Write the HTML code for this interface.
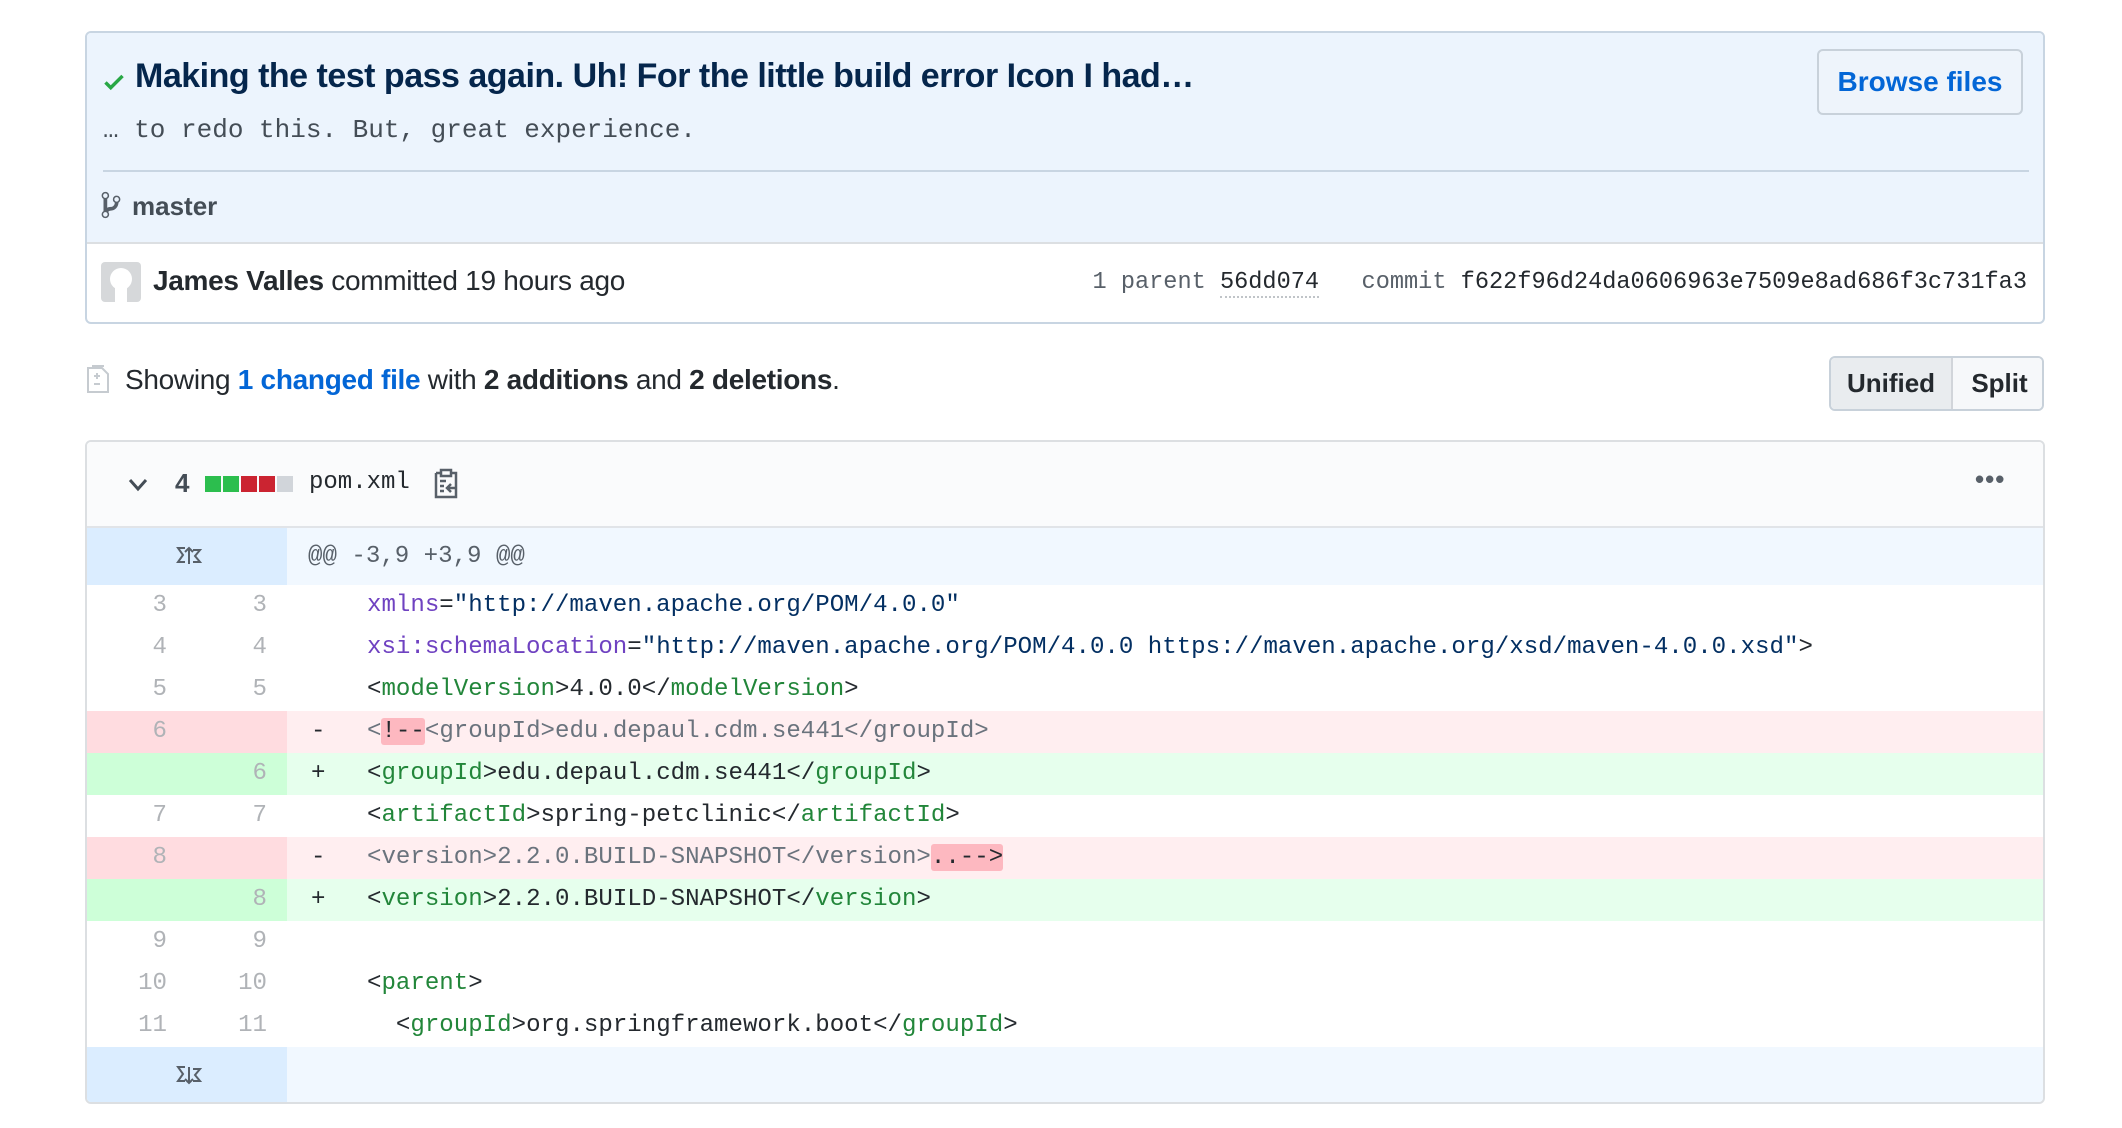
<!DOCTYPE html>
<html><head><meta charset="utf-8">
<style>
*{box-sizing:border-box;margin:0;padding:0}
body{width:2122px;height:1128px;background:#fff;font-family:"Liberation Sans",sans-serif;color:#24292e;position:relative;overflow:hidden}
.abs{position:absolute}
.mono{font-family:"Liberation Mono",monospace}
.box{left:85px;top:31px;width:1960px;height:293px;border:2px solid #c8d5e2;border-radius:6px;overflow:hidden;background:#fff}
.top{left:0;top:0;width:100%;height:211px;background:#ecf4fd;border-bottom:2px solid #dcdfe2}
.title{left:48px;top:24px;font-size:34px;font-weight:bold;color:#05264c;letter-spacing:-0.5px;white-space:nowrap}
.desc{left:16px;top:82px;font-size:26px;color:#444d56;white-space:pre}
.sep{left:16px;top:137px;width:1926px;height:2px;background:#c8d5e2}
.btn{left:1730px;top:16px;width:206px;height:66px;border:2px solid #c8d1da;border-radius:6px;background:#eef4fb;color:#0366d6;font-weight:bold;font-size:28px;text-align:center;line-height:62px}
.code{font-family:"Liberation Mono",monospace;font-size:24.1px;white-space:pre}
.row{position:absolute;left:0;width:1958px;height:42px;line-height:42px}
.ln{position:absolute;width:100px;height:100%;text-align:right;padding-right:20px;color:#b0b3b7}
.ln1{left:0}.ln2{left:100px}
.mk{position:absolute;left:224px}
.tx{position:absolute;left:280px}
.t{color:#22863a}.a{color:#6f42c1}.s{color:#032f62}.c{color:#6a737d}
.del{background:#ffeef0}.del .ln{background:#ffdce0}
.add{background:#e6ffed}.add .ln{background:#cdffd8}
.hl{background:#fdb8c0;border-radius:3px}
</style></head><body>

<div class="abs box">
  <div class="abs top">
    <svg class="abs" style="left:14px;top:36px" width="26" height="26" viewBox="0 0 12 16"><path d="M12 5l-8 8-4-4 1.5-1.5L4 10l6.5-6.5z" fill="#28a745"/></svg>
    <div class="abs title">Making the test pass again. Uh! For the little build error Icon I had…</div>
    <div class="abs desc mono">… to redo this. But, great experience.</div>
    <div class="abs sep"></div>
    <svg class="abs" style="left:14px;top:157px" width="20" height="30" viewBox="0 0 10 16"><path fill="#586069" d="M10 5c0-1.11-.89-2-2-2a1.993 1.993 0 0 0-1 3.720v.3c-.02.52-.23.98-.63 1.38-.4.4-.86.61-1.38.63-.83.02-1.480.16-2 .45V4.72a1.993 1.993 0 0 0-1-3.72C.88 1 0 1.89 0 3a2 2 0 0 0 1 1.72v6.56c-.59.35-1 .99-1 1.72 0 1.11.89 2 2 2 1.11 0 2-.89 2-2 0-.53-.2-1-.53-1.36.09-.06.48-.41.59-.47.25-.11.56-.17.94-.17 1.05-.05 1.95-.45 2.75-1.25S8.95 7.77 9 6.73h-.02C9.59 6.37 10 5.73 10 5zM2 1.8c.66 0 1.2.55 1.2 1.2 0 .65-.55 1.2-1.2 1.2C1.35 4.2.8 3.65.8 3c0-.65.55-1.2 1.2-1.2zm0 12.41c-.66 0-1.2-.55-1.2-1.2 0-.65.55-1.2 1.2-1.2.65 0 1.2.55 1.2 1.2 0 .65-.55 1.2-1.2 1.2zm6-8c-.66 0-1.2-.55-1.2-1.2 0-.65.55-1.2 1.2-1.2.65 0 1.2.55 1.2 1.2 0 .65-.55 1.2-1.2 1.2z"/></svg>
    <div class="abs" style="left:45px;top:158px;font-size:26px;font-weight:bold;color:#444d56">master</div>
    <div class="abs btn">Browse files</div>
  </div>
  <div class="abs" style="left:14px;top:229px;width:40px;height:40px;border-radius:4px;background:#d6d8da;overflow:hidden">
    <svg width="40" height="40" viewBox="0 0 40 40"><circle cx="20" cy="17" r="11" fill="#fff"/><rect x="14" y="24" width="12" height="16" fill="#fff"/></svg>
  </div>
  <div class="abs" style="left:66px;top:232px;font-size:28px;white-space:nowrap;letter-spacing:-0.3px"><b>James Valles</b> committed 19 hours ago</div>
  <div class="abs mono" style="right:16px;top:236px;font-size:23.6px;color:#586069;white-space:pre">1 parent <span style="color:#24292e;border-bottom:2px dotted #c0c4c8">56dd074</span>   commit <span style="color:#24292e">f622f96d24da0606963e7509e8ad686f3c731fa3</span></div>
</div>

<svg class="abs" style="left:86px;top:364px" width="24" height="30" viewBox="0 0 24 30"><path d="M2 4h14l6 6v18H2z" fill="none" stroke="#c6cbd0" stroke-width="2"/><path d="M6 2h12" stroke="#c6cbd0" stroke-width="2"/><path d="M8 12h6M11 9v6M8 20h6" stroke="#c6cbd0" stroke-width="2"/></svg>
<div class="abs" style="left:125px;top:364px;font-size:28px;white-space:nowrap;letter-spacing:-0.3px">Showing <span style="color:#0366d6;font-weight:bold">1 changed file</span> with <b>2 additions</b> and <b>2 deletions</b>.</div>

<div class="abs" style="left:1829px;top:356px;width:215px;height:55px;border:2px solid #c8d1da;border-radius:6px;overflow:hidden;font-size:26px;font-weight:bold">
  <div class="abs" style="left:0;top:0;width:122px;height:100%;background:#e9ecef;border-right:2px solid #d1d5da;text-align:center;line-height:51px">Unified</div>
  <div class="abs" style="left:122px;top:0;width:93px;height:100%;background:#f6f8fa;text-align:center;line-height:51px">Split</div>
</div>

<div class="abs" style="left:85px;top:440px;width:1960px;height:664px;border:2px solid #dcdfe2;border-radius:6px;overflow:hidden;background:#fff">
  <div class="abs" style="left:0;top:0;width:100%;height:86px;background:#fafbfc;border-bottom:2px solid #e1e4e8">
    <svg class="abs" style="left:40px;top:33px" width="22" height="20" viewBox="0 0 22 20"><path d="M3 5l8 9 8-9" fill="none" stroke="#444d56" stroke-width="3"/></svg>
    <div class="abs" style="left:88px;top:26px;font-size:26px;font-weight:bold;color:#444d56">4</div>
    <div class="abs" style="left:118px;top:34px;width:16px;height:16px;background:#2cbe4e"></div>
    <div class="abs" style="left:136px;top:34px;width:16px;height:16px;background:#2cbe4e"></div>
    <div class="abs" style="left:154px;top:34px;width:16px;height:16px;background:#cb2431"></div>
    <div class="abs" style="left:172px;top:34px;width:16px;height:16px;background:#cb2431"></div>
    <div class="abs" style="left:190px;top:34px;width:16px;height:16px;background:#d1d5da"></div>
    <div class="abs mono" style="left:222px;top:27px;font-size:24px">pom.xml</div>
    <svg class="abs" style="left:346px;top:26px" width="26" height="32" viewBox="0 0 26 32"><path d="M3 5h5M18 5h5v24H3V5" fill="none" stroke="#586069" stroke-width="2.5"/><rect x="8" y="2" width="10" height="6" fill="none" stroke="#586069" stroke-width="2.5"/><path d="M7 13h6M7 18h4M7 23h4M24 20h-10M18 16l-4 4 4 4" fill="none" stroke="#586069" stroke-width="2.5"/></svg>
    <div class="abs" style="left:1888px;top:22px;font-size:26px;font-weight:bold;color:#586069;letter-spacing:1px">•••</div>
  </div>
  <div class="abs" style="left:0;top:86px;width:100%;height:57px;background:#f1f8ff">
    <div class="abs" style="left:0;top:0;width:200px;height:57px;background:#dbedff"></div>
    <svg class="abs" style="left:88px;top:16px" width="28" height="24" viewBox="0 0 28 24" fill="none" stroke="#586069" stroke-width="2"><path d="M10 4H3l5 7-5 7h7M14 20V4M10 8l4-4 4 4M18 6h7l-5 6 5 6h-7"/></svg>
    <div class="abs code" style="left:221px;top:15px;color:#586069">@@ -3,9 +3,9 @@</div>
  </div>
  <div class="abs code" style="left:0;top:143px;width:100%">
    <div class="row" style="top:0"><span class="ln ln1">3</span><span class="ln ln2">3</span><span class="tx"><span class="a">xmlns</span>=<span class="s">"http://maven.apache.org/POM/4.0.0"</span></span></div>
    <div class="row" style="top:42px"><span class="ln ln1">4</span><span class="ln ln2">4</span><span class="tx"><span class="a">xsi:schemaLocation</span>=<span class="s">"http://maven.apache.org/POM/4.0.0 https://maven.apache.org/xsd/maven-4.0.0.xsd"</span>&gt;</span></div>
    <div class="row" style="top:84px"><span class="ln ln1">5</span><span class="ln ln2">5</span><span class="tx">&lt;<span class="t">modelVersion</span>&gt;4.0.0&lt;/<span class="t">modelVersion</span>&gt;</span></div>
    <div class="row del" style="top:126px"><span class="ln ln1">6</span><span class="ln ln2"></span><span class="mk">-</span><span class="tx c">&lt;<span class="hl" style="color:#24292e">!--</span>&lt;groupId&gt;edu.depaul.cdm.se441&lt;/groupId&gt;</span></div>
    <div class="row add" style="top:168px"><span class="ln ln1"></span><span class="ln ln2">6</span><span class="mk">+</span><span class="tx">&lt;<span class="t">groupId</span>&gt;edu.depaul.cdm.se441&lt;/<span class="t">groupId</span>&gt;</span></div>
    <div class="row" style="top:210px"><span class="ln ln1">7</span><span class="ln ln2">7</span><span class="tx">&lt;<span class="t">artifactId</span>&gt;spring-petclinic&lt;/<span class="t">artifactId</span>&gt;</span></div>
    <div class="row del" style="top:252px"><span class="ln ln1">8</span><span class="ln ln2"></span><span class="mk">-</span><span class="tx c">&lt;version&gt;2.2.0.BUILD-SNAPSHOT&lt;/version&gt;<span class="hl" style="color:#24292e">..--&gt;</span></span></div>
    <div class="row add" style="top:294px"><span class="ln ln1"></span><span class="ln ln2">8</span><span class="mk">+</span><span class="tx">&lt;<span class="t">version</span>&gt;2.2.0.BUILD-SNAPSHOT&lt;/<span class="t">version</span>&gt;</span></div>
    <div class="row" style="top:336px"><span class="ln ln1">9</span><span class="ln ln2">9</span></div>
    <div class="row" style="top:378px"><span class="ln ln1">10</span><span class="ln ln2">10</span><span class="tx">&lt;<span class="t">parent</span>&gt;</span></div>
    <div class="row" style="top:420px"><span class="ln ln1">11</span><span class="ln ln2">11</span><span class="tx">  &lt;<span class="t">groupId</span>&gt;org.springframework.boot&lt;/<span class="t">groupId</span>&gt;</span></div>
  </div>
  <div class="abs" style="left:0;top:605px;width:100%;height:57px;background:#f1f8ff">
    <div class="abs" style="left:0;top:0;width:200px;height:57px;background:#dbedff"></div>
    <svg class="abs" style="left:88px;top:16px" width="28" height="24" viewBox="0 0 28 24" fill="none" stroke="#586069" stroke-width="2"><path d="M10 4H3l5 7-5 7h7M14 4v16M10 16l4 4 4-4M18 6h7l-5 6 5 6h-7"/></svg>
  </div>
</div>
</body></html>
